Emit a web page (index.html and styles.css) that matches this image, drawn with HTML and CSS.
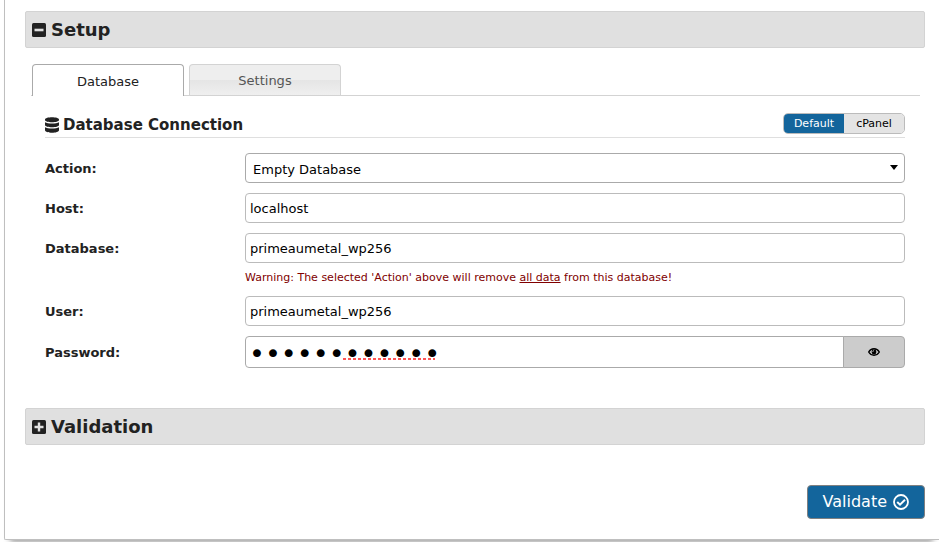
FILE: index.html
```html
<!DOCTYPE html>
<html lang="en">
<head>
<meta charset="utf-8">
<title>Setup</title>
<link rel="stylesheet" href="styles.css">
</head>
<body>
<main class="card">
  <h2 class="section">
    <button type="button" class="section-toggle" aria-expanded="true">
      <svg class="square" viewBox="0 0 14 14" aria-hidden="true"><rect width="14" height="14" rx="1.500"/><path d="M2.500 7h9" stroke="#e0e0e0" stroke-width="2.600"/></svg>
      Setup
    </button>
  </h2>

  <nav class="tabs" role="tablist">
    <button type="button" class="tab tab-active" role="tab" aria-selected="true">Database</button>
    <button type="button" class="tab" role="tab" aria-selected="false">Settings</button>
  </nav>

  <form class="panel">
    <div class="panel-head">
      <h3 class="panel-title">
        <svg class="db" viewBox="0 0 14 16" aria-hidden="true"><path d="M0 2.500C0-.6 14-.6 14 2.500V3c0 3-14 3-14 0zM0 5.200c2.500 1.700 11.500 1.700 14 0V8c0 3-14 3-14 0zM0 10.200c2.500 1.700 11.500 1.700 14 0V13.300c0 3.300-14 3.300-14 0z"/></svg>
        Database Connection
      </h3>
      <div class="modes">
        <button type="button" class="mode mode-active">Default</button>
        <button type="button" class="mode">cPanel</button>
      </div>
    </div>

    <div class="row">
      <label for="action">Action:</label>
      <div class="select-wrap">
        <select id="action" class="control select"><option>Empty Database</option></select>
        <svg class="caret" viewBox="0 0 8 5" aria-hidden="true"><path d="M0 0h8L4 5z"/></svg>
      </div>
    </div>
    <div class="row">
      <label for="host">Host:</label>
      <input id="host" class="control" type="text" value="localhost">
    </div>
    <div class="row">
      <label for="database">Database:</label>
      <input id="database" class="control" type="text" value="primeaumetal_wp256">
      <p class="warning">Warning: The selected 'Action' above will remove <u>all data</u> from this database!</p>
    </div>
    <div class="row">
      <label for="user">User:</label>
      <input id="user" class="control" type="text" value="primeaumetal_wp256">
    </div>
    <div class="row">
      <label for="password">Password:</label>
      <div class="password">
        <input id="password" class="control secret" type="password" value="abcdefghijkl">
        <span class="squiggle"></span>
        <button type="button" class="reveal" aria-label="Show password">
          <svg class="eye" viewBox="0 0 12 8" aria-hidden="true"><path d="M.7 4C3-.3 9-.3 11.300 4 9 8.300 3 8.300.7 4z" fill="none" stroke="#000" stroke-width="1.400"/><circle cx="6" cy="4" r="2.400"/><path d="M4.700 3.900A1.300 1.300 0 0 1 6 2.600" fill="none" stroke="#ccc" stroke-width=".8"/></svg>
        </button>
      </div>
    </div>
  </form>

  <h2 class="section">
    <button type="button" class="section-toggle" aria-expanded="false">
      <svg class="square" viewBox="0 0 14 14" aria-hidden="true"><rect width="14" height="14" rx="1.500"/><path d="M2.500 7h9M7 2.500v9" stroke="#e0e0e0" stroke-width="2.400"/></svg>
      Validation
    </button>
  </h2>

  <div class="actions">
    <button type="button" class="validate">Validate
      <svg class="check" viewBox="0 0 16 16" aria-hidden="true"><circle cx="8" cy="8" r="7" fill="none" stroke="#fff" stroke-width="1.800"/><path d="M4.200 8l2.800 2.700 5-5" fill="none" stroke="#fff" stroke-width="2"/></svg>
    </button>
  </div>
</main>
</body>
</html>
```
FILE: styles.css
```css
* {
  box-sizing: border-box;
}

body {
  margin: 0;
  background: #fff;
  color: #222;
  font: 13px/16px Verdana, "DejaVu Sans", sans-serif;
  overflow-x: hidden;
}

button,
input,
select {
  margin: 0;
  font: inherit;
}

.card {
  margin: 0 0 2px 4px;
  padding: 11px 14px 20px 20px;
  border: 1px solid #bfbfbf;
  border-width: 0 0 1px 1px;
  border-radius: 0 0 0 2px;
  box-shadow: 0 8px 6px -6px #999;
}

.section {
  margin: 0;
  border: 1px solid #d3d3d3;
  border-radius: 2px;
  background: #e0e0e0;
}

.section-toggle {
  display: flex;
  align-items: center;
  gap: 5px;
  width: 100%;
  height: 35px;
  padding: 0 6px;
  border: 0;
  background: none;
  color: #222;
  font-size: 18px;
  font-weight: bold;
}

.square {
  width: 14px;
  height: 14px;
  fill: #222;
}

.tabs {
  display: flex;
  gap: 5px;
  margin: 16px 5px 0 6px;
  padding-left: 1px;
  height: 32px;
  border-bottom: 1px solid #d3d3d3;
}

.tab {
  width: 152px;
  height: 31px;
  padding: 2px 0 0;
  border: 1px solid #d3d3d3;
  border-bottom: 0;
  border-radius: 4px 4px 0 0;
  background: linear-gradient(#eee 0 50%, #e5e5e5 50%, #efefef);
  color: #555;
}

.tab-active {
  height: 32px;
  border-color: #aaa;
  background: #fff;
  color: #212121;
}

.panel {
  display: flex;
  flex-direction: column;
  gap: 10px;
  padding: 17px 20px 40px;
}

.panel-head {
  display: flex;
  justify-content: space-between;
  height: 25px;
  margin-bottom: 5px;
  border-bottom: 1px solid #dfdfdf;
}

.panel-title {
  display: flex;
  align-items: center;
  gap: 4px;
  height: 24px;
  margin: 0;
  font-size: 15px;
}

.db {
  width: 14px;
  height: 16px;
  fill: #222;
}

.modes {
  display: flex;
  height: 21px;
  border: 1px solid #bbb;
  border-radius: 5px;
  overflow: hidden;
}

.mode {
  width: 60px;
  padding: 0;
  border: 0;
  background: #e4e4e4;
  color: #000;
  font-size: 11px;
}

.mode-active {
  background: #13659c;
  color: #fff;
}

.row {
  display: grid;
  grid-template-columns: 200px 1fr;
  align-items: center;
}

.row label {
  padding-top: 1px;
  font-weight: bold;
}

.control {
  display: block;
  width: 100%;
  height: 30px;
  padding: 0 4px;
  border: 1px solid #bbb;
  border-radius: 4px;
  background: #fff;
  color: #000;
}

.select-wrap {
  position: relative;
}

.select {
  appearance: none;
  padding: 3px 7px 0;
  border-color: #aaa;
}

.caret {
  position: absolute;
  top: 12px;
  right: 7px;
  width: 8px;
  height: 5px;
  pointer-events: none;
}

.warning {
  grid-column: 2;
  margin: 7px 0 0;
  color: maroon;
  font-size: 11px;
}

.password {
  position: relative;
  display: flex;
  height: 32px;
}

.secret {
  flex: 1;
  height: 32px;
  padding: 2px 3px 0;
  border-color: #aaa;
  border-radius: 4px 0 0 4px;
  font-size: 27px;
}

.squiggle {
  position: absolute;
  left: 98px;
  bottom: 8px;
  width: 92px;
  height: 2px;
  background: repeating-linear-gradient(90deg, #f55 0 3px, transparent 3px 5px);
}

.reveal {
  display: flex;
  align-items: center;
  justify-content: center;
  width: 62px;
  margin-left: -1px;
  padding: 0;
  border: 1px solid #aaa;
  border-radius: 0 4px 4px 0;
  background: #ccc;
}

.eye {
  width: 12px;
  height: 8px;
}

.actions {
  display: flex;
  justify-content: flex-end;
  margin-top: 40px;
}

.validate {
  display: flex;
  align-items: center;
  justify-content: center;
  gap: 6px;
  height: 34px;
  padding: 0 15px;
  border: 1px solid gray;
  border-radius: 4px;
  background: #13659c;
  color: #fff;
  font-size: 16px;
}

.check {
  width: 16px;
  height: 16px;
}
```
